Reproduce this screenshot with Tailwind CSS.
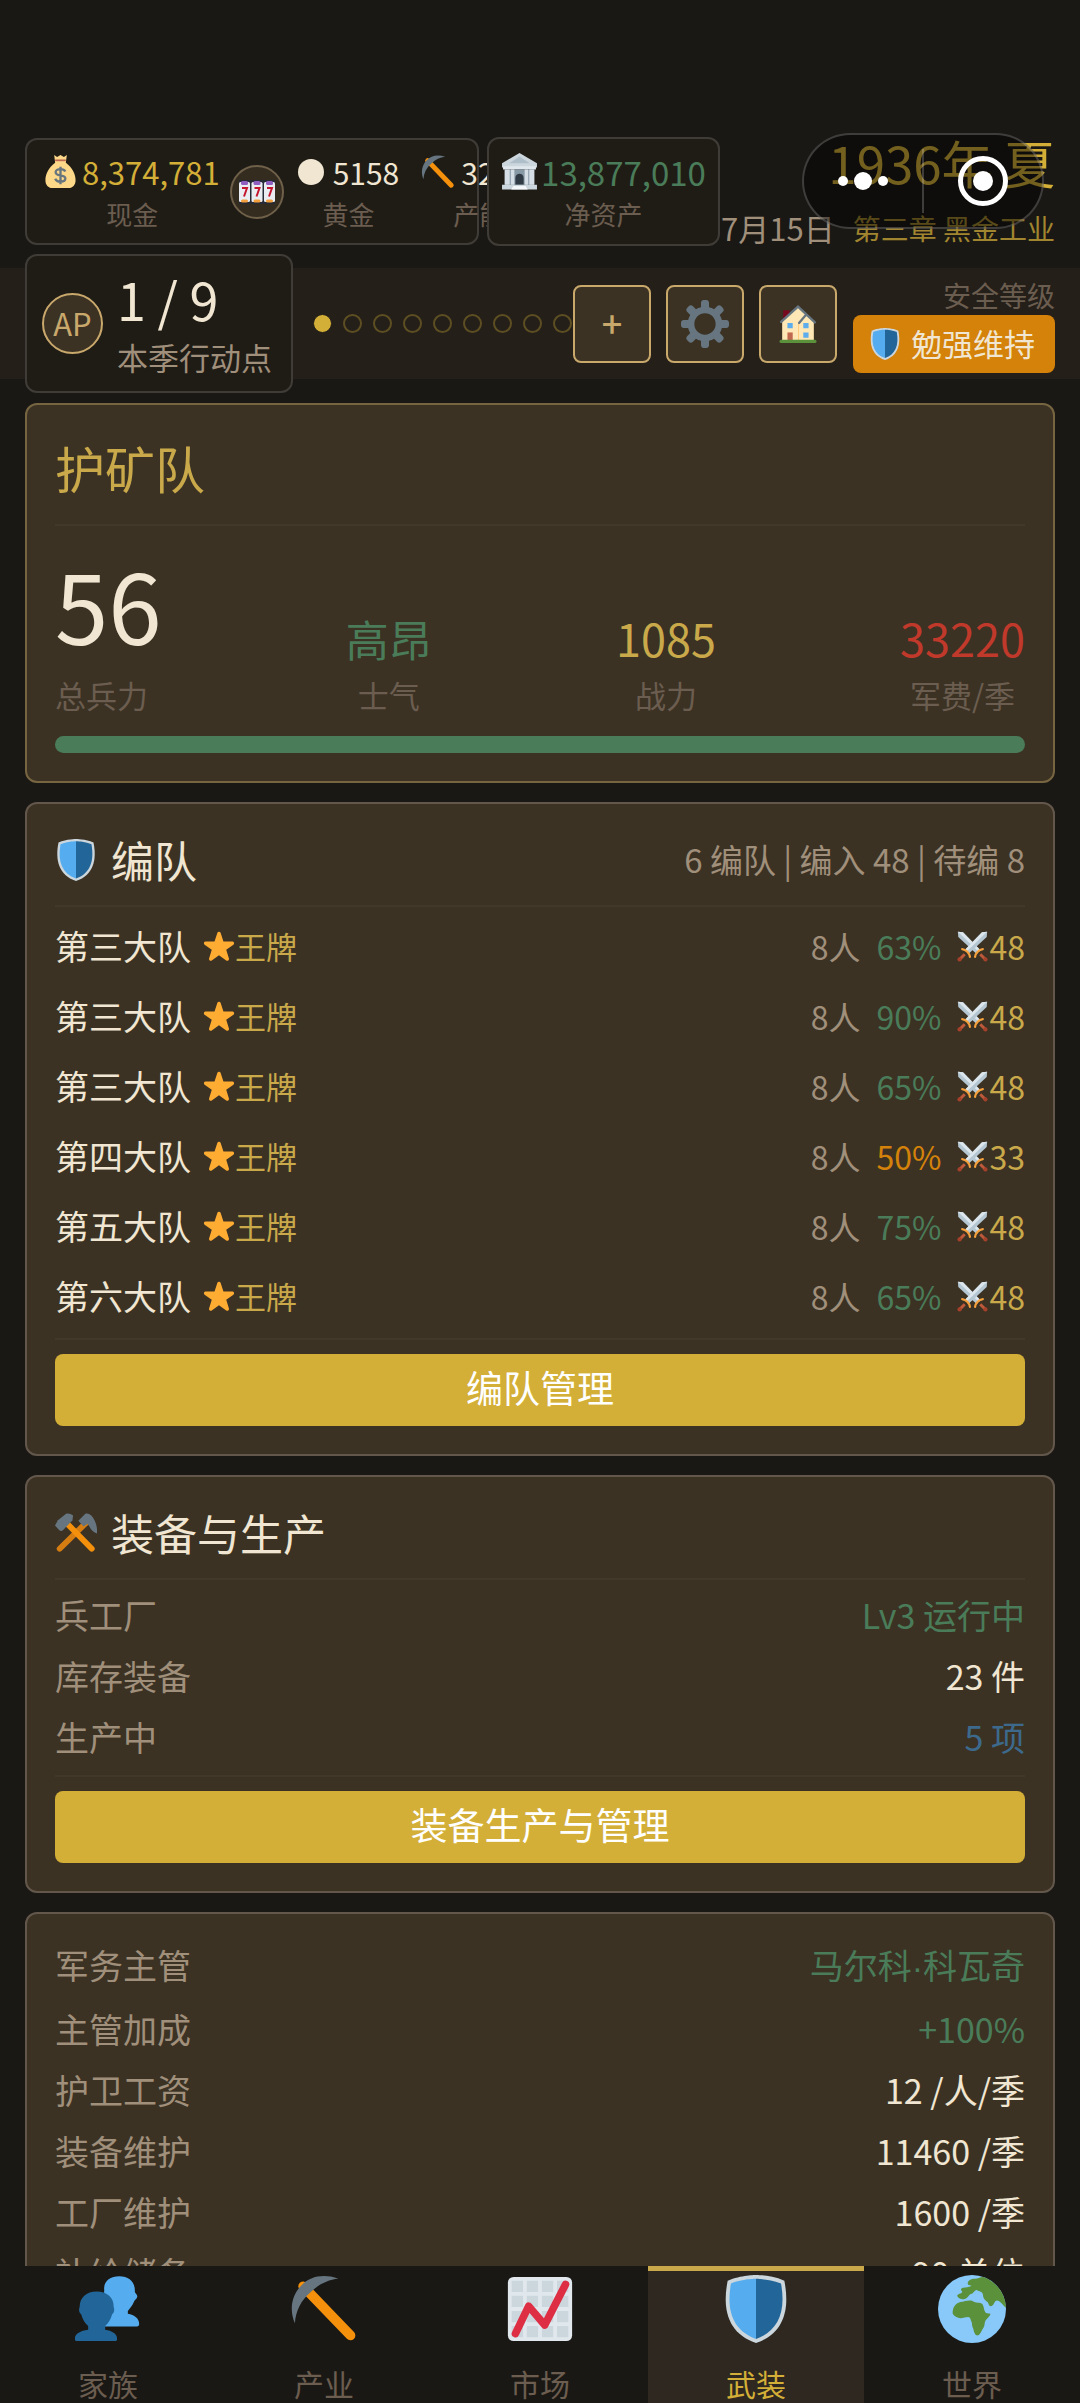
<!DOCTYPE html>
<html lang="zh-CN">
  <head>
    <meta charset="UTF-8" />
    <meta name="viewport" content="width=device-width, initial-scale=1.0" />
    <title>护矿队</title>
    <script src="https://cdn.jsdelivr.net/npm/@tailwindcss/browser@4"></script>
  </head>
  <body class="bg-[#1a1814] font-['Noto_Sans_CJK_SC',sans-serif] text-[#f0e6d2]">
    <!-- shared icons -->
    <svg class="hidden" aria-hidden="true">
      <symbol id="shield" viewBox="0 0 36 36">
        <path fill="#CCD6DD" d="M33 3c-7-3-15-3-15-3S10 0 3 3C0 18 3 31 18 36c15-5 18-18 15-33z" />
        <path fill="#55ACEE" d="M18 33.884C6.412 29.729 1.961 19.831 4.76 4.444 11.063 2.029 17.928 2 18 2z" />
        <path fill="#226699" d="M31.24 4.444C25.01 2.038 18.136 2 18 2v31.884c11.588-4.155 16.039-14.053 13.24-29.44z" />
      </symbol>
      <symbol id="star" viewBox="0 0 36 36">
        <path fill="#FFAC33" d="M27.287 34.627c-.404 0-.806-.124-1.152-.371L18 28.422l-8.135 5.834a1.97 1.97 0 0 1-2.312-.008 1.971 1.971 0 0 1-.721-2.194l3.034-9.792-8.062-5.681a1.98 1.98 0 0 1-.708-2.203 1.978 1.978 0 0 1 1.866-1.363L12.947 13l3.179-9.549a1.976 1.976 0 0 1 3.749 0L23 13l10.036.015a1.975 1.975 0 0 1 1.159 3.566l-8.062 5.681 3.034 9.792a1.97 1.97 0 0 1-.72 2.194 1.957 1.957 0 0 1-1.16.379z" />
      </symbol>
      <symbol id="pick" viewBox="0 0 36 36">
        <path stroke="#F4900C" stroke-width="5.2" stroke-linecap="round" d="M7 6l25 26" />
        <path fill="#66757F" d="M25.6 1.9C17.500-.8 10.500.8 6 5.500.8 10.800-.5 18.500 2.600 25.600 3 19 5.800 13.500 11 9c4.500-4.300 9-6.300 14.600-7.100z" />
      </symbol>
      <symbol id="swords" viewBox="0 0 36 36">
        <g id="sword">
          <path fill="#B4C6D1" d="M1 1l6 .5L27 22l-4.500 4.500L1.500 7z" />
          <path fill="#DCE6EC" d="M1 1l6 .5L27 22l-2 2z" />
          <path stroke="#F4A03C" stroke-width="2.600" stroke-linecap="round" d="M21 30c.5-4.500 4.500-8.500 9-9" />
          <path stroke="#BE5A3A" stroke-width="3.400" d="M27 27l5.500 5.500" />
          <circle cx="33" cy="33" r="2.500" fill="#A5402A" />
        </g>
        <use href="#sword" transform="matrix(-1 0 0 1 36 0)" />
      </symbol>
      <symbol id="hammer-pick" viewBox="0 0 36 36">
        <path stroke="#D67D12" stroke-width="5" stroke-linecap="round" d="M4 31.500L30 6" />
        <path fill="#66757F" d="M20 7.500L26 1.500c2-.8 4 .3 5.500 2C35 8 36.500 13 36 18.500c-2-.8-3.500-1.800-5-3.500l-3-5-3.500 2.500z" />
        <path stroke="#F4900C" stroke-width="5" stroke-linecap="round" d="M8 7.500l23.500 24" />
        <path fill="#66757F" d="M0 11.500L2.500 7 9.500 1.500c2-.8 4 0 6 1.500L15 7l-8 8.500c-1 1-2.500 1-3.500 0z" />
      </symbol>
    </svg>

    <div class="relative flex h-screen flex-col overflow-hidden">
      <header class="pt-[137px]">
        <!-- resources -->
        <div class="flex h-[109px] items-center px-[25px] whitespace-nowrap">
          <div class="flex h-[107px] w-[454px] shrink-0 items-center rounded-xl border-2 border-[#3f3c37] bg-[#1f1c16] pl-[18px]">
            <div class="flex shrink-0 flex-col items-center">
              <div class="flex h-11 items-center gap-[6px] text-[31px] leading-[44px] text-[#d4af37]">
                <svg class="h-[35px] w-[31px]" viewBox="0 0 31 36" fill="none">
                  <path fill="#FDD888" d="M9 1l3 2 3.500-2L19 3l3-2-1 8c7 5 10 12 10 18 0 5-3 8-7 8H7c-4 0-7-3-7-8C0 21 3 14 10 9z" />
                  <path stroke="#BF6952" stroke-width="1.800" d="M10 6.500h11" />
                  <path stroke="#67757F" stroke-width="2.400" d="M15.500 13v18M20.500 18c-1-2-3-2.500-5-2.500-3 0-5 1.200-5 3.200 0 4.800 10 1.800 10 6.600 0 2.200-2 3.200-5 3.200-2.500 0-4.500-.8-5.500-3" />
                </svg>
                <span>8,374,781</span>
              </div>
              <span class="text-[26px] leading-[40px] text-[#6b5d4f]">现金</span>
            </div>
            <button class="ml-[10px] flex size-[54px] shrink-0 items-center justify-center rounded-full border-2 border-[#6f6049] bg-[#352c20]" aria-label="老虎机">
              <svg class="h-6 w-9" viewBox="0 0 36 24">
                <rect width="36" height="24" fill="#262a35" />
                <g id="reel">
                  <rect x="0" y="2" width="11" height="20" rx="1.500" fill="#E9EDF2" />
                  <rect x="2" y="1" width="7" height="4" rx="1.500" fill="#8E5FC0" />
                  <rect x="2" y="19.500" width="7" height="3" rx="1.500" fill="#F4A03C" />
                  <path d="M3 8h5L5 16.500" fill="none" stroke="#C5162E" stroke-width="2" />
                </g>
                <use href="#reel" x="12.500" />
                <use href="#reel" x="25" />
              </svg>
            </button>
            <div class="ml-[14px] flex shrink-0 flex-col items-center">
              <div class="flex h-11 items-center gap-[9px] text-[30px] leading-[44px]">
                <span class="size-[26px] rounded-full bg-[#f0e6d2]"></span>
                <span>5158</span>
              </div>
              <span class="text-[26px] leading-[40px] text-[#6b5d4f]">黄金</span>
            </div>
            <div class="ml-[22px] flex w-[116px] shrink-0 flex-col items-center">
              <div class="flex h-11 items-center gap-[6px] self-start text-[30px] leading-[44px]">
                <svg class="size-[34px]"><use href="#pick" /></svg>
                <span>32</span>
              </div>
              <span class="text-[26px] leading-[40px] text-[#6b5d4f]">产能</span>
            </div>
          </div>
          <div class="relative ml-2 flex h-[109px] w-[233px] shrink-0 flex-col items-center justify-center rounded-xl border-2 border-[#3f3c37] bg-[#1f1c16]">
            <div class="flex h-11 items-center gap-[3px] text-[33px] leading-[44px] text-[#4a7c59]">
              <svg class="size-[37px]" viewBox="0 0 36 36">
                <path fill="#CCD6DD" d="M18 0L35 10v4H1v-4z" />
                <path fill="#AFBFC9" d="M18 3.500L28 10H8z" />
                <path fill="#E1E8ED" d="M2 13h32v3H2z" />
                <path fill="#8899A6" d="M4 16h28v15H4z" />
                <path fill="#D5DEE4" d="M3.500 16h5v15h-5zM9.500 16h3.500v15H9.500zM23 16h3.500v15H23zM27.500 16h5v15h-5z" />
                <path fill="#2F3A44" d="M14 31v-7c0-5 8-5 8 0v7z" />
                <path fill="#CCD6DD" d="M1 31h34v4.500H1z" />
                <path fill="#F5F8FA" d="M12 32h12l2 3.500H10z" />
              </svg>
              <span>13,877,010</span>
            </div>
            <span class="text-[26px] leading-[40px] text-[#6b5d4f]">净资产</span>
          </div>
          <div class="flex min-w-0 flex-1 flex-col items-end gap-4 self-start leading-[50px]">
            <div class="text-[51px] text-[#d4af37]">1936年 夏</div>
            <div class="flex items-center gap-[18px]">
              <span class="text-[31px] text-[#a08f7a]">7月15日</span>
              <span class="text-[28px] text-[#a1852f]">第三章 黑金工业</span>
            </div>
          </div>
        </div>

        <!-- action points -->
        <div class="mt-[22px] flex h-[111px] items-center bg-[#241f19] px-[25px] whitespace-nowrap">
          <div class="flex h-[139px] w-[268px] shrink-0 items-center gap-[14px] rounded-xl border-2 border-[#3f3c37] bg-[#1f1c16] pl-[15px]">
            <span class="flex size-[61px] shrink-0 items-center justify-center rounded-full border-2 border-[#c9a86c] bg-[#3b3224] text-[31px] text-[#c9a86c]">AP</span>
            <div class="flex flex-col">
              <span class="text-[52px] leading-[66px]">1 / 9</span>
              <span class="text-[31px] leading-[50px] text-[#a08f7a]">本季行动点</span>
            </div>
          </div>
          <div class="ml-5 flex shrink-0 gap-[11px]">
            <span class="size-[19px] rounded-full border border-[#241f19] bg-[#d4af37]"></span>
            <span class="size-[19px] rounded-full border-2 border-[#5e4f23]"></span>
            <span class="size-[19px] rounded-full border-2 border-[#5e4f23]"></span>
            <span class="size-[19px] rounded-full border-2 border-[#5e4f23]"></span>
            <span class="size-[19px] rounded-full border-2 border-[#5e4f23]"></span>
            <span class="size-[19px] rounded-full border-2 border-[#5e4f23]"></span>
            <span class="size-[19px] rounded-full border-2 border-[#5e4f23]"></span>
            <span class="size-[19px] rounded-full border-2 border-[#5e4f23]"></span>
            <span class="size-[19px] rounded-full border-2 border-[#5e4f23]"></span>
          </div>
          <div class="ml-px flex shrink-0 gap-[15px]">
            <button class="flex size-[78px] items-center justify-center rounded-lg border-2 border-[#c9a86c] bg-[#3b3224] pb-1 text-[36px] font-medium text-[#c9a86c]" aria-label="增加">+</button>
            <button class="flex size-[78px] items-center justify-center rounded-lg border-2 border-[#c9a86c] bg-[#3b3224]" aria-label="设置">
              <svg class="size-12" viewBox="0 0 36 36">
                <path fill="#66757F" d="M34 15h-3.362c-.324-1.369-.864-2.651-1.582-3.814l2.379-2.379c.781-.781.781-2.048 0-2.829l-1.414-1.414c-.781-.781-2.047-.781-2.828 0l-2.379 2.379C23.65 6.225 22.369 5.686 21 5.362V2c0-1.104-.896-2-2-2h-2c-1.104 0-2 .896-2 2v3.362c-1.369.324-2.651.864-3.814 1.582L8.808 4.565c-.781-.781-2.048-.781-2.828 0L4.565 5.979c-.781.781-.781 2.048-.001 2.829l2.379 2.379C6.225 12.35 5.686 13.632 5.362 15H2c-1.104 0-2 .896-2 2v2c0 1.104.896 2 2 2h3.362c.324 1.368.864 2.65 1.582 3.813l-2.379 2.379c-.78.78-.78 2.048.001 2.829l1.414 1.414c.78.78 2.047.78 2.828 0l2.379-2.379c1.163.719 2.445 1.258 3.814 1.582V34c0 1.104.896 2 2 2h2c1.104 0 2-.896 2-2v-3.362c1.368-.324 2.65-.864 3.813-1.582l2.379 2.379c.781.781 2.047.781 2.828 0l1.414-1.414c.781-.781.781-2.048 0-2.829l-2.379-2.379c.719-1.163 1.258-2.445 1.582-3.814H34c1.104 0 2-.896 2-2v-2C36 15.896 35.104 15 34 15zM18 26c-4.418 0-8-3.582-8-8s3.582-8 8-8 8 3.582 8 8-3.582 8-8 8z" />
              </svg>
            </button>
            <button class="flex size-[78px] items-center justify-center rounded-lg border-2 border-[#c9a86c] bg-[#3b3224]" aria-label="住宅">
              <svg class="size-[38px]" viewBox="0 0 36 36" fill="none">
                <path fill="#77091F" d="M4 5h6v9H4z" />
                <path fill="#FFE8B6" d="M3 34V15L18 1l15 15v18z" />
                <path fill="#FFCC80" d="M18 17h1v17h-1z" />
                <path stroke="#66757F" stroke-width="2.200" stroke-linecap="round" d="M2 16L18 1.500 34 16.500M19 17l6-7" />
                <path fill="#5DADEC" d="M8 17h5v5H8zM23 17h5v5h-5zM23 26h5v5h-5z" />
                <path fill="#C1694F" d="M8 26h5v8H8z" />
                <path fill="#5C913B" d="M2 33h32a1.500 1.500 0 0 1 0 3H2a1.500 1.500 0 0 1 0-3z" />
              </svg>
            </button>
          </div>
          <div class="flex flex-1 flex-col items-end">
            <span class="text-[28px] leading-[40px] text-[#6b5d4f]">安全等级</span>
            <span class="flex h-[58px] items-center gap-[10px] rounded-lg bg-[#d4820a] pr-5 pl-4 text-[31px]">
              <svg class="size-8"><use href="#shield" /></svg>勉强维持
            </span>
          </div>
        </div>
      </header>

      <main class="flex min-h-0 flex-1 flex-col gap-[19px] overflow-hidden px-[25px] pt-6">
        <section class="shrink-0 rounded-xl border-2 border-[#766540] bg-[#3b3224] p-7">
          <h1 class="border-b-2 border-[#413829] pb-[22px] text-[50px] leading-[69px] text-[#c9a94a]">护矿队</h1>
          <div class="flex items-end justify-between pt-5 text-[45px] leading-[60px]">
            <div class="flex flex-col">
              <span class="text-[96px] leading-[116px]">56</span>
              <span class="mt-[10px] text-[31px] leading-[46px] text-[#6b5d4f]">总兵力</span>
            </div>
            <div class="flex flex-col items-center">
              <span class="text-[43px] text-[#4a7c59]">高昂</span>
              <span class="mt-1 text-[31px] leading-[46px] text-[#6b5d4f]">士气</span>
            </div>
            <div class="flex flex-col items-center">
              <span class="text-[#c9a94a]">1085</span>
              <span class="mt-1 text-[31px] leading-[46px] text-[#6b5d4f]">战力</span>
            </div>
            <div class="flex flex-col items-center">
              <span class="text-[#c0392b]">33220</span>
              <span class="mt-1 text-[31px] leading-[46px] text-[#6b5d4f]">军费/季</span>
            </div>
          </div>
          <div class="mt-[18px] h-[17px] rounded-full bg-[#4a7c59]"></div>
        </section>

        <section class="shrink-0 rounded-xl border-2 border-[#62574a] bg-[#3b3224] p-7">
          <div class="flex items-center justify-between border-b-2 border-[#413829] pb-[18px] leading-[55px]">
            <h2 class="flex items-center gap-[14px] text-[43px]">
              <svg class="size-[42px]"><use href="#shield" /></svg>编队
            </h2>
            <span class="text-[33px] text-[#a08f7a]">6 编队 | 编入 48 | 待编 8</span>
          </div>
          <ul class="border-b-2 border-[#413829] pt-1 pb-[7px] text-[34px] leading-[70px]">
            <li class="flex items-center justify-between">
              <span class="flex items-center gap-3">第三大队<span class="flex items-center text-[31px] text-[#c9a94a]"><svg class="size-8"><use href="#star" /></svg>王牌</span></span>
              <span class="flex items-center gap-4 text-[32px] text-[#a08f7a]">8人<span class="text-[#4a7c59]">63%</span><span class="flex items-center gap-px text-[#c9a94a]"><svg class="size-[31px]" fill="none"><use href="#swords" /></svg>48</span></span>
            </li>
            <li class="flex items-center justify-between">
              <span class="flex items-center gap-3">第三大队<span class="flex items-center text-[31px] text-[#c9a94a]"><svg class="size-8"><use href="#star" /></svg>王牌</span></span>
              <span class="flex items-center gap-4 text-[32px] text-[#a08f7a]">8人<span class="text-[#4a7c59]">90%</span><span class="flex items-center gap-px text-[#c9a94a]"><svg class="size-[31px]" fill="none"><use href="#swords" /></svg>48</span></span>
            </li>
            <li class="flex items-center justify-between">
              <span class="flex items-center gap-3">第三大队<span class="flex items-center text-[31px] text-[#c9a94a]"><svg class="size-8"><use href="#star" /></svg>王牌</span></span>
              <span class="flex items-center gap-4 text-[32px] text-[#a08f7a]">8人<span class="text-[#4a7c59]">65%</span><span class="flex items-center gap-px text-[#c9a94a]"><svg class="size-[31px]" fill="none"><use href="#swords" /></svg>48</span></span>
            </li>
            <li class="flex items-center justify-between">
              <span class="flex items-center gap-3">第四大队<span class="flex items-center text-[31px] text-[#c9a94a]"><svg class="size-8"><use href="#star" /></svg>王牌</span></span>
              <span class="flex items-center gap-4 text-[32px] text-[#a08f7a]">8人<span class="text-[#d4820a]">50%</span><span class="flex items-center gap-px text-[#c9a94a]"><svg class="size-[31px]" fill="none"><use href="#swords" /></svg>33</span></span>
            </li>
            <li class="flex items-center justify-between">
              <span class="flex items-center gap-3">第五大队<span class="flex items-center text-[31px] text-[#c9a94a]"><svg class="size-8"><use href="#star" /></svg>王牌</span></span>
              <span class="flex items-center gap-4 text-[32px] text-[#a08f7a]">8人<span class="text-[#4a7c59]">75%</span><span class="flex items-center gap-px text-[#c9a94a]"><svg class="size-[31px]" fill="none"><use href="#swords" /></svg>48</span></span>
            </li>
            <li class="flex items-center justify-between">
              <span class="flex items-center gap-3">第六大队<span class="flex items-center text-[31px] text-[#c9a94a]"><svg class="size-8"><use href="#star" /></svg>王牌</span></span>
              <span class="flex items-center gap-4 text-[32px] text-[#a08f7a]">8人<span class="text-[#4a7c59]">65%</span><span class="flex items-center gap-px text-[#c9a94a]"><svg class="size-[31px]" fill="none"><use href="#swords" /></svg>48</span></span>
            </li>
          </ul>
          <button class="mt-[14px] h-[72px] w-full rounded-lg bg-[#d4af37] pb-1 text-[37px] text-white">编队管理</button>
        </section>

        <section class="shrink-0 rounded-xl border-2 border-[#62574a] bg-[#3b3224] p-7">
          <h2 class="flex items-center gap-[14px] border-b-2 border-[#413829] pb-[18px] text-[43px] leading-[55px]">
            <svg class="size-[42px]" fill="none"><use href="#hammer-pick" /></svg>装备与生产
          </h2>
          <dl class="border-b-2 border-[#413829] pt-1 pb-2 text-[34px] leading-[61px]">
            <div class="flex justify-between"><dt class="text-[#a08f7a]">兵工厂</dt><dd class="text-[#4a7c59]">Lv3 运行中</dd></div>
            <div class="flex justify-between"><dt class="text-[#a08f7a]">库存装备</dt><dd>23 件</dd></div>
            <div class="flex justify-between"><dt class="text-[#a08f7a]">生产中</dt><dd class="text-[#3d6a8c]">5 项</dd></div>
          </dl>
          <button class="mt-[14px] h-[72px] w-full rounded-lg bg-[#d4af37] pb-1 text-[37px] text-white">装备生产与管理</button>
        </section>

        <section class="shrink-0 rounded-xl border-2 border-[#62574a] bg-[#3b3224] px-7 py-5">
          <dl class="text-[34px] leading-[61px]">
            <div class="flex justify-between"><dt class="text-[#a08f7a]">军务主管</dt><dd class="text-[#4a7c59]">马尔科<span class="font-['Liberation_Sans',sans-serif]">·</span>科瓦奇</dd></div>
            <div class="flex justify-between"><dt class="text-[#a08f7a]">主管加成</dt><dd class="text-[#4a7c59]">+100%</dd></div>
            <div class="flex justify-between"><dt class="text-[#a08f7a]">护卫工资</dt><dd>12 /人/季</dd></div>
            <div class="flex justify-between"><dt class="text-[#a08f7a]">装备维护</dt><dd>11460 /季</dd></div>
            <div class="flex justify-between"><dt class="text-[#a08f7a]">工厂维护</dt><dd>1600 /季</dd></div>
            <div class="flex justify-between"><dt class="text-[#a08f7a]">补给储备</dt><dd>90 单位</dd></div>
          </dl>
        </section>
      </main>

      <nav class="grid h-[137px] shrink-0 grid-cols-5 text-[30px] leading-[44px] text-[#6b5d4f]">
        <a href="#family" class="flex flex-col items-center gap-[18px] border-t-[5px] border-transparent pt-1">
          <svg class="size-[68px] shrink-0" viewBox="0 0 36 36">
            <path fill="#55ACEE" d="M16 8C15.500 3.500 19 .7 24 .7s8.500 3 8.200 8c0 1 1.500 1.500 1.300 2.800-.2 1.200-1.300 1.500-1.700 2.500-.8 2-2 3.500-3.300 5v1.500c3.500.5 6 2.500 6 5.500 0 .8-.4 1.200-1 1.200H15z" />
            <path fill="#226699" d="M3 17C3 12 6.500 8.800 12 8.800s9.200 3.200 9 8.200c.5 1 .5 3-.8 3.800-.7 2.700-2 4.700-3.700 6.200v2c3.500.5 6.300 2 6.300 4.700 0 .8-.3 1.300-1 1.300H1.500c-.7 0-1-.5-1-1.300C.5 31 3.500 29.500 7.500 29v-2c-1.700-1.500-3-3.500-3.700-6.200C2.500 20 2.500 18 3 17z" />
          </svg>
          家族
        </a>
        <a href="#industry" class="flex flex-col items-center gap-[18px] border-t-[5px] border-transparent pt-1">
          <svg class="size-[68px] shrink-0"><use href="#pick" /></svg>
          产业
        </a>
        <a href="#market" class="flex flex-col items-center gap-[18px] border-t-[5px] border-transparent pt-1">
          <svg class="size-[68px] shrink-0" viewBox="0 0 36 36" fill="none">
            <rect x="1" y="1" width="34" height="34" rx="3" fill="#E1E8ED" />
            <path fill="#CCD6DD" d="M3 3h6v6H3zM11 3h6v6h-6zM19 3h6v6h-6zM27 3h6v6h-6zM3 11h6v6H3zM11 11h6v6h-6zM19 11h6v6h-6zM27 11h6v6h-6zM3 19h6v6H3zM11 19h6v6h-6zM19 19h6v6h-6zM27 19h6v6h-6zM3 27h6v6H3zM11 27h6v6h-6zM19 27h6v6h-6zM27 27h6v6h-6z" />
            <path stroke="#DD2E44" stroke-width="4" stroke-linecap="round" stroke-linejoin="round" d="M5 31l7-14.500 8.500 10L31.500 5" />
          </svg>
          市场
        </a>
        <a href="#army" aria-current="page" class="flex flex-col items-center gap-[18px] border-t-[5px] border-[#c9a94a] bg-[#2e2820] pt-1 text-[#d4af37]">
          <svg class="size-[68px] shrink-0"><use href="#shield" /></svg>
          武装
        </a>
        <a href="#world" class="flex flex-col items-center gap-[18px] border-t-[5px] border-transparent pt-1">
          <svg class="size-[68px] shrink-0" viewBox="0 0 36 36">
            <circle cx="18" cy="18" r="18" fill="#88C9F9" />
            <path fill="#5C913B" d="M16 5.200C15 3.500 17 2 19.500 2c1.500 0 2.500-1 4.500-1 6.500 2.200 11.500 8.500 12 16.200-1.800-1-2.500-3.500-5-3.700-1.500.5-1 2.500-3 3-1.500-.2-1-2-2.200-2.500-1.300-.8-2-2-2-3.500-.3-2-2-1.500-3.300-2.500-1.500.2-1.500 2-3.500 2.200-1 .8-1.500 2.500-3.500 2.700-1.500 0-3.500-1-3.300-2.200.8-1 2.800-.8 2.600-2-1-.8-.8-1.800.5-2 1.500-.2 3-.2 4.500-1z" />
            <path fill="#5C913B" d="M7.800 20.500c-.3-3 1.400-5.500 4-6.200 2.500-.4 4.500-1.300 6.500-.6 1.700 1.200 4 .6 5.200 1.600 1 1.500.7 3.500 1.800 4.700.7.600 2.200.2 2.500.6-.3 1.400-2 2.400-2.800 3.800-.5 1.500-.2 3-1.300 4-.8 1.500-1.700 3.600-3 3.600-1.500-.5-1.600-2.500-2.200-4-.8-1.300-.2-2.500-.9-3.500-.3-1-.5-2.200-1.600-2.300-1.500 0-2.500.5-4 .7-1.800-.2-3.500-1-4.200-2.400z" />
            <path stroke="#88C9F9" stroke-width="1" fill="none" d="M24 15l2.500 4 3.500-1.500" />
          </svg>
          世界
        </a>
      </nav>

      <!-- mini-program capsule floating over the header -->
      <div class="absolute top-[133px] right-9 flex h-24 w-[242px] items-center rounded-full border-2 border-white/20 bg-black/45">
        <button class="flex h-full flex-1 items-center justify-center gap-[6px]" aria-label="更多">
          <span class="size-[10px] rounded-full bg-white"></span>
          <span class="size-[18px] rounded-full bg-white"></span>
          <span class="size-[10px] rounded-full bg-white"></span>
        </button>
        <span class="h-16 w-[2px] bg-white/20"></span>
        <button class="flex h-full flex-1 items-center justify-center" aria-label="关闭">
          <span class="flex size-[50px] items-center justify-center rounded-full border-[5px] border-white"><span class="size-5 rounded-full bg-white"></span></span>
        </button>
      </div>
    </div>
  </body>
</html>
